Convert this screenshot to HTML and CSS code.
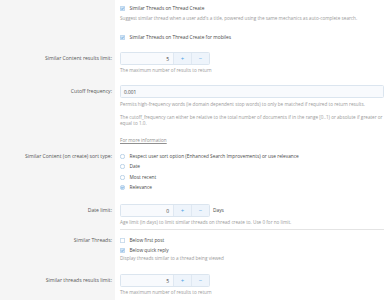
FILE: index.html
```html
<!DOCTYPE html>
<html>
<head>
<meta charset="utf-8">
<link rel="stylesheet" href="styles.css">
</head>
<body>
<div class="form">
  <div class="row ra">
    <div class="label"></div>
    <div class="ctrl">
      <div class="opt"><svg class="ico" viewBox="0 0 10 10"><rect x="0.5" y="0.5" width="9" height="9" rx="1" class="box-on"/><path d="M2.4 5.2 L4.2 7 L7.6 3.2" class="tick"/></svg><span>Similar Threads on Thread Create</span></div>
      <div class="hint h-a">Suggest similar thread when a user add's a title, powered using the same mechanics as auto-complete search.</div>
    </div>
  </div>
  <div class="row rb">
    <div class="label"></div>
    <div class="ctrl">
      <div class="opt"><svg class="ico" viewBox="0 0 10 10"><rect x="0.5" y="0.5" width="9" height="9" rx="1" class="box-on"/><path d="M2.4 5.2 L4.2 7 L7.6 3.2" class="tick"/></svg><span>Similar Threads on Thread Create for mobiles</span></div>
    </div>
  </div>
  <div class="row rc">
    <div class="label lbl-input">Similar Content results limit:</div>
    <div class="ctrl">
      <div class="spin"><div class="num">5</div><div class="btn">+</div><div class="btn">&minus;</div></div>
      <div class="hint h-in">The maximum number of results to return</div>
    </div>
  </div>
  <div class="row rd">
    <div class="label lbl-input">Cutoff frequency:</div>
    <div class="ctrl">
      <div class="text-in">0.001</div>
      <div class="hint h-in2">Permits high-frequency words (ie domain dependent stop words) to only be matched if required to return results.</div>
      <div class="hint h-p">The cutoff_frequency can either be relative to the total number of documents if in the range [0..1) or absolute if greater or equal to 1.0.</div>
      <div class="hint h-link"><span class="link">For more information</span></div>
    </div>
  </div>
  <div class="row re">
    <div class="label lbl-line">Similar Content (on create) sort type:</div>
    <div class="ctrl">
      <div class="opt"><svg class="ico" viewBox="0 0 10 10"><circle cx="5" cy="5" r="4.4" class="box-off"/></svg><span>Respect user sort option (Enhanced Search Improvements) or use relevance</span></div>
      <div class="opt o-next"><svg class="ico" viewBox="0 0 10 10"><circle cx="5" cy="5" r="4.4" class="box-off"/></svg><span>Date</span></div>
      <div class="opt o-next"><svg class="ico" viewBox="0 0 10 10"><circle cx="5" cy="5" r="4.4" class="box-off"/></svg><span>Most recent</span></div>
      <div class="opt o-next"><svg class="ico" viewBox="0 0 10 10"><circle cx="5" cy="5" r="4.4" class="box-on"/><path d="M2.8 5.2 L4.4 6.7 L7.3 3.6" class="tick"/></svg><span>Relevance</span></div>
    </div>
  </div>
  <div class="row rf">
    <div class="label lbl-input">Date limit:</div>
    <div class="ctrl">
      <div class="spin-line"><div class="spin"><div class="num">0</div><div class="btn">+</div><div class="btn">&minus;</div></div><span class="unit">Days</span></div>
      <div class="hint h-in">Age limit (in days) to limit similar threads on thread create to. Use 0 for no limit.</div>
      <div class="sep"></div>
    </div>
  </div>
  <div class="row rg">
    <div class="label lbl-line">Similar Threads:</div>
    <div class="ctrl">
      <div class="opt"><svg class="ico" viewBox="0 0 10 10"><rect x="0.5" y="0.5" width="9" height="9" rx="1" class="box-off"/></svg><span>Below first post</span></div>
      <div class="opt o-next2"><svg class="ico" viewBox="0 0 10 10"><rect x="0.5" y="0.5" width="9" height="9" rx="1" class="box-on"/><path d="M2.4 5.2 L4.2 7 L7.6 3.2" class="tick"/></svg><span>Below quick reply</span></div>
      <div class="hint h-g">Display threads similar to a thread being viewed</div>
    </div>
  </div>
  <div class="row rh">
    <div class="label lbl-input">Similar threads results limit:</div>
    <div class="ctrl">
      <div class="spin"><div class="num">5</div><div class="btn">+</div><div class="btn">&minus;</div></div>
      <div class="hint h-in">The maximum number of results to return</div>
    </div>
  </div>
</div>
</body>
</html>
```

FILE: styles.css
```css
html, body {
  margin: 0;
  padding: 0;
  overflow: hidden;
  background: #fff;
}
body {
  font-family: "Open Sans", "Noto Sans", sans-serif;
  color: #4a4a4a;
  width: 387px;
  height: 300px;
}
.form {
  display: flex;
  flex-direction: column;
}
.row {
  display: grid;
  grid-template-columns: 115px 1fr;
}
.label {
  background: #f5f5f5;
  text-align: right;
  padding-right: 3px;
  font-size: 5.1px;
  color: #555;
  white-space: nowrap;
}
.lbl-input { line-height: 13px; }
.lbl-line { line-height: 7px; }
.ctrl {
  padding-left: 5px;
  padding-right: 3px;
  font-size: 4.8px;
  position: relative;
}
.opt {
  display: flex;
  align-items: center;
  gap: 4.5px;
  height: 7px;
  line-height: 7px;
  white-space: nowrap;
  color: #484848;
}
.ico {
  width: 5px;
  height: 5px;
  flex: none;
}
.box-on { fill: #d6e6f5; stroke: #8fbbe2; stroke-width: 1; }
.box-off { fill: #ffffff; stroke: #7eaad3; stroke-width: 1; }
.tick { fill: none; stroke: #3f8fd6; stroke-width: 1.4; }
.o-next { margin-top: 3.5px; }
.o-next2 { margin-top: 3px; }
.hint {
  font-size: 4.65px;
  line-height: 6.5px;
  color: #9a9a9a;
}
.ra .ctrl, .ra .label { padding-top: 5px; }
.ra { height: 29px; }
.h-a { margin-top: 3px; }
.rb { height: 18px; }
.rb .ctrl { padding-top: 4.5px; }
.rc .ctrl, .rc .label { padding-top: 5px; }
.rc { height: 31px; }
.h-in { margin-top: 2px; }
.spin {
  display: flex;
  width: 90px;
  height: 13px;
  box-sizing: border-box;
  border: 0.6px solid #dbe5ef;
  border-radius: 1.5px;
  overflow: hidden;
  background: #f8fafd;
}
.num {
  flex: 1;
  text-align: right;
  padding-right: 4px;
  line-height: 12px;
  font-size: 5px;
  color: #444;
}
.btn {
  width: 17px;
  flex: none;
  text-align: center;
  line-height: 12px;
  font-size: 6px;
  color: #4a9ee6;
  background: #eef4fb;
  border-left: 0.6px solid #dfe8f2;
}
.spin-line {
  display: flex;
  align-items: center;
  gap: 3px;
}
.unit { font-size: 4.8px; color: #484848; }
.rd { height: 70px; }
.rd .ctrl, .rd .label { padding-top: 7px; }
.text-in {
  height: 13px;
  box-sizing: border-box;
  border: 0.6px solid #dbe5ef;
  border-radius: 1.5px;
  background: #f8fafd;
  line-height: 12px;
  padding-left: 3px;
  font-size: 4.8px;
  color: #444;
}
.h-in2 { margin-top: 2.5px; }
.h-p { margin-top: 6.5px; }
.h-link { margin-top: 10px; }
.link { text-decoration: underline; color: #8f8f8f; }
.re { height: 50px; }
.re .ctrl, .re .label { padding-top: 4.5px; }
.rf { height: 32px; }
.rf .ctrl, .rf .label { padding-top: 5.5px; }
.sep {
  position: absolute;
  left: 5px;
  right: 3px;
  bottom: 0;
  height: 0.6px;
  background: #e4e4e4;
}
.rg { height: 38px; }
.rg .ctrl, .rg .label { padding-top: 6.5px; }
.h-g { margin-top: 1.75px; }
.rh { height: 40px; }
.rh .ctrl, .rh .label { padding-top: 6px; }
```
